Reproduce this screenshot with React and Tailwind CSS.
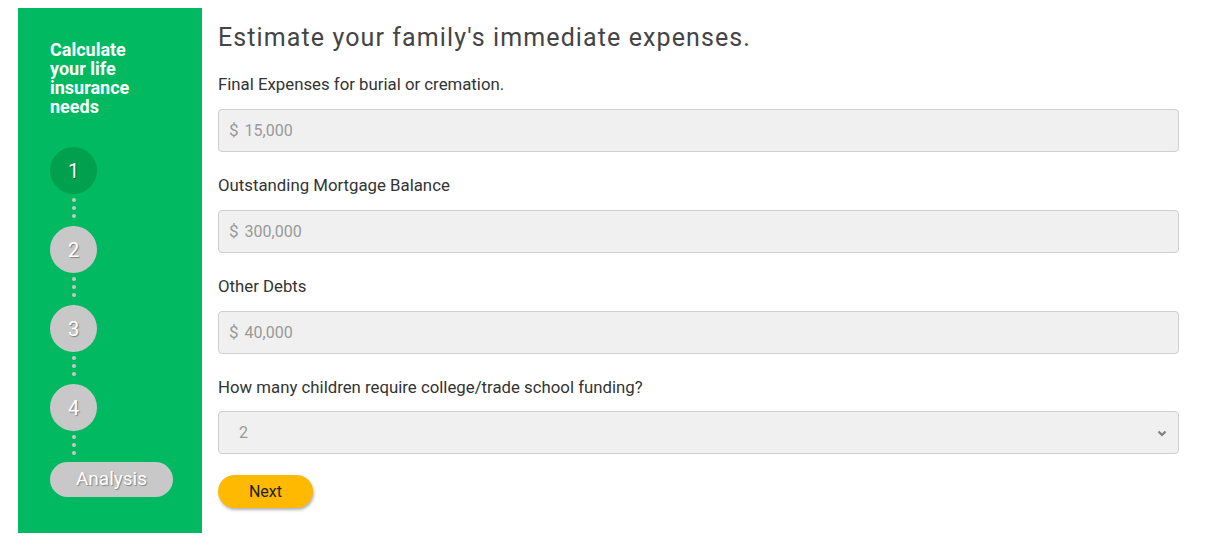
import React from 'react'

const Dots = () => (
  <div className='flex flex-col items-center gap-[4px] pt-[4px] pb-[8px]'>
    <span className='w-[4px] h-[4px] rounded-full bg-[#c8c8c8]' />
    <span className='w-[4px] h-[4px] rounded-full bg-[#c8c8c8]' />
    <span className='w-[4px] h-[4px] rounded-full bg-[#c8c8c8]' />
  </div>
)

const Step = ({ n, active }) => (
  <div
    className={`w-[47px] h-[47px] rounded-full flex items-center justify-center text-[20px] text-white [text-shadow:1px_1px_1px_rgba(0,0,0,0.35)] ${
      active ? 'bg-[#00a04f]' : 'bg-[#c8c8c8]'
    }`}
  >
    {n}
  </div>
)

const MoneyField = ({ label, value }) => (
  <div className='mb-[21px]'>
    <label className='block text-[16.8px] leading-[24px] text-[#333] mb-[13px]'>{label}</label>
    <div className='h-[43px] rounded-[4px] border border-[#cfcfcf] bg-[#f0f0f0] flex items-center px-[10px] text-[16px] text-[#999]'>
      <span className='mr-[6px] text-[17px]'>$</span>
      <span>{value}</span>
    </div>
  </div>
)

export default function App() {
  return (
    <div className='flex w-[1213px] h-[548px] bg-white font-["Roboto",sans-serif] pt-[8px]'>
      {/* sidebar */}
      <div className='ml-[18px] w-[184px] h-[525px] bg-[#00b961] pl-[32px] pt-[32px] flex flex-col'>
        <h1 className='text-white font-bold text-[18px] leading-[19px] w-[100px]'>
          Calculate your life insurance needs
        </h1>
        <div className='mt-[31px] flex flex-col items-start'>
          <div className='flex flex-col items-center w-[47px]'>
            <Step n='1' active />
            <Dots />
            <Step n='2' />
            <Dots />
            <Step n='3' />
            <Dots />
            <Step n='4' />
            <Dots />
          </div>
          <div className='w-[123px] h-[35px] -mt-[1px] rounded-full bg-[#c8c8c8] text-white text-[19px] flex items-center justify-center [text-shadow:1px_1px_1px_rgba(0,0,0,0.35)]'>
            Analysis
          </div>
        </div>
      </div>

      {/* main */}
      <div className='ml-[16px] w-[961px] pt-[14px]'>
        <h2 className='text-[25px] leading-[32px] tracking-[1.1px] text-[#444] mb-[18px]'>
          Estimate your family's immediate expenses.
        </h2>
        <MoneyField label='Final Expenses for burial or cremation.' value='15,000' />
        <MoneyField label='Outstanding Mortgage Balance' value='300,000' />
        <MoneyField label='Other Debts' value='40,000' />
        <div>
          <label className='block text-[16.8px] leading-[24px] text-[#333] mb-[12px]'>
            How many children require college/trade school funding?
          </label>
          <div className='h-[43px] rounded-[4px] border border-[#cfcfcf] bg-[#f0f0f0] flex items-center justify-between pl-[20px] pr-[10px] text-[16px] text-[#999]'>
            <span>2</span>
            <svg width='12' height='12' viewBox='0 0 12 12' fill='none' stroke='#808080' strokeWidth='2.2'>
              <path d='M2.5 4.5 L6 8 L9.5 4.5' />
            </svg>
          </div>
        </div>
        <button className='mt-[21px] w-[95px] h-[33px] rounded-full bg-[#ffb900] text-[#222] text-[16px] shadow-[1px_2px_3px_rgba(0,0,0,0.3)]'>
          Next
        </button>
      </div>
    </div>
  )
}
